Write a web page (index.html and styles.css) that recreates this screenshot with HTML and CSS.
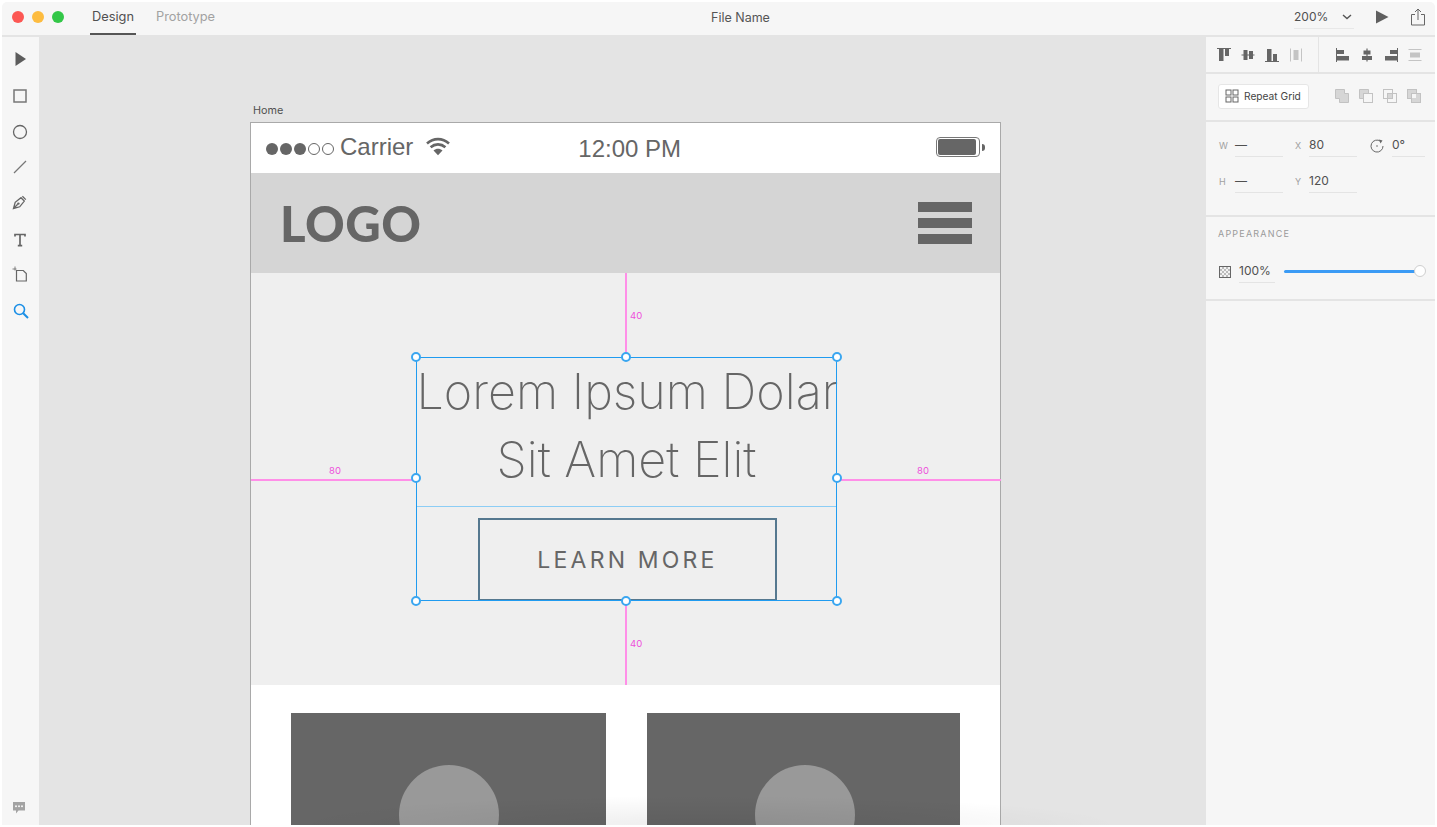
FILE: index.html
```html
<!DOCTYPE html>
<html lang="en">
<head>
    <meta charset="UTF-8">
    <title>File Name</title>
    <link rel="stylesheet" href="styles.css">
</head>
<body>
    <div class="window">
        <header class="titlebar">
            <div class="lights">
                <span class="light red"></span>
                <span class="light yellow"></span>
                <span class="light green"></span>
            </div>
            <nav class="tabs">
                <a class="tab active">Design</a>
                <a class="tab">Prototype</a>
            </nav>
            <div class="file-name">File Name</div>
            <div class="zoom-select">
                <span>200%</span>
                <svg width="10" height="6" viewBox="0 0 10 6"><path d="M1 1l4 3.6L9 1" fill="none" stroke="#555" stroke-width="1.4"/></svg>
            </div>
            <svg class="play" width="14" height="14" viewBox="0 0 14 14"><path d="M1 0.5L13.5 7 1 13.5z" fill="#5f5f5f"/></svg>
            <svg class="share" width="16" height="18" viewBox="0 0 16 18"><path d="M5 6.5H1.5v10.5h13V6.5H11M8 12V1.2M5 4l3-3 3 3" fill="none" stroke="#666" stroke-width="1"/></svg>
        </header>

        <div class="main">
            <aside class="toolbar">
                <div class="tool tool-arrow"><svg width="14" height="16" viewBox="0 0 14 16"><path d="M1.500 1l10.500 7-10.500 7z" fill="#5c5c5c"/></svg></div>
                <div class="tool"><svg width="14" height="14" viewBox="0 0 14 14"><rect x="1" y="1" width="12" height="12" fill="none" stroke="#777" stroke-width="1.500"/></svg></div>
                <div class="tool"><svg width="16" height="16" viewBox="0 0 16 16"><circle cx="8" cy="8" r="6.500" fill="none" stroke="#666" stroke-width="1.300"/></svg></div>
                <div class="tool up1"><svg width="14" height="14" viewBox="0 0 14 14"><path d="M1 13L13 1" stroke="#777" stroke-width="1.200"/></svg></div>
                <div class="tool up2"><svg width="16" height="16" viewBox="0 0 16 16"><path d="M1.500 14.500L3.200 8.300 9 3.700l3.300 3.400-4.600 5.700zM10.400 2.200l3.400 3.400M1.500 14.500l4.200-4.200" fill="none" stroke="#666" stroke-width="1.300"/><circle cx="6.400" cy="9.600" r="1.200" fill="#666"/></svg></div>
                <div class="tool"><svg width="14" height="14" viewBox="0 0 14 14"><path d="M2 3.500V1.500h10v2M7 1.500v11M4.800 12.700h4.400" fill="none" stroke="#666" stroke-width="1.700"/></svg></div>
                <div class="tool up2"><svg width="16" height="16" viewBox="0 0 16 16"><path d="M4.500 4.500h6.800l3 3v7.500H4.500z" fill="none" stroke="#666" stroke-width="1.200"/><path d="M0.500 3h4M3 0.500v4" stroke="#666" stroke-width="0.800"/></svg></div>
                <div class="tool up1 tool-search"><svg width="16" height="16" viewBox="0 0 16 16"><circle cx="6.500" cy="6.500" r="5" fill="none" stroke="#1b8fe6" stroke-width="1.600"/><path d="M10.200 10.200l4.800 4.800" stroke="#1b8fe6" stroke-width="2"/></svg></div>
                <div class="tool chat"><svg width="14" height="14" viewBox="0 0 14 14"><path d="M1 1h12v8.500H6.500L4 12.500V9.500H1z" fill="#a3a3a3"/><circle cx="4" cy="5.200" r="1" fill="#f6f6f6"/><circle cx="7" cy="5.200" r="1" fill="#f6f6f6"/><circle cx="10" cy="5.200" r="1" fill="#f6f6f6"/></svg></div>
            </aside>

            <main class="canvas">
                <div class="artboard-name">Home</div>
                <div class="artboard">
                    <div class="status-bar">
                        <div class="signal">
                            <span class="dot"></span><span class="dot"></span><span class="dot"></span>
                            <span class="dot empty"></span><span class="dot empty"></span>
                        </div>
                        <span class="carrier">Carrier</span>
                        <svg class="wifi" width="24" height="19" viewBox="0 0 24 19"><path d="M1 6.500C7.500 0.700 16.500 0.700 23 6.500M4.600 10.300C9 6.400 15 6.400 19.400 10.300" fill="none" stroke="#666" stroke-width="2.600"/><path d="M7.500 13.500C10.300 11.300 13.700 11.300 16.500 13.500L12 18.300z" fill="#666"/></svg>
                        <span class="clock">12:00 PM</span>
                        <div class="battery"><span class="battery-fill"></span></div>
                        <span class="battery-tip"></span>
                    </div>
                    <div class="site-header">
                        <div class="logo">LOGO</div>
                        <div class="burger"><span></span><span></span><span></span></div>
                    </div>
                    <section class="hero">
                        <h1 class="hero-title">Lorem Ipsum Dolar<br>Sit Amet Elit</h1>
                        <a class="learn-more">LEARN MORE</a>

                        <div class="guide guide-top"><span class="guide-num">40</span></div>
                        <div class="guide guide-bottom"><span class="guide-num">40</span></div>
                        <div class="guide guide-left"><span class="guide-num">80</span></div>
                        <div class="guide guide-right"><span class="guide-num">80</span></div>
                        <div class="selection">
                            <div class="selection-line"></div>
                            <span class="handle h-tl"></span><span class="handle h-tc"></span><span class="handle h-tr"></span>
                            <span class="handle h-ml"></span><span class="handle h-mr"></span>
                            <span class="handle h-bl"></span><span class="handle h-bc"></span><span class="handle h-br"></span>
                        </div>
                    </section>
                    <section class="cards">
                        <div class="card card-a"><span class="card-circle"></span></div>
                        <div class="card card-b"><span class="card-circle"></span></div>
                    </section>
                </div>
                <div class="bottom-shadow"></div>
            </main>

            <aside class="panel">
                <div class="panel-section align-row">
                    <div class="align-group first">
                        <svg width="16" height="16" viewBox="0 0 16 16"><path d="M1 1.500h14" stroke="#666" stroke-width="1"/><rect x="3" y="2" width="4.500" height="12" fill="#666"/><rect x="9" y="2" width="4" height="7" fill="#666"/></svg>
                        <svg width="16" height="16" viewBox="0 0 16 16"><path d="M1.500 8h13" stroke="#666" stroke-width="1.200"/><rect x="3.500" y="3" width="4" height="10" fill="#666"/><rect x="9" y="4" width="4" height="8" fill="#666"/></svg>
                        <svg width="16" height="16" viewBox="0 0 16 16"><path d="M1 14.500h14" stroke="#666" stroke-width="1"/><rect x="3" y="2" width="4.500" height="12" fill="#666"/><rect x="9" y="7" width="4" height="7" fill="#666"/></svg>
                        <svg width="16" height="16" viewBox="0 0 16 16"><path d="M2.500 1.500v13M13.500 1.500v13" stroke="#c4c4c4" stroke-width="1"/><rect x="5.500" y="3" width="5" height="10" fill="#c4c4c4"/></svg>
                    </div>
                    <div class="align-group">
                        <svg width="16" height="16" viewBox="0 0 16 16"><path d="M1.500 1v14" stroke="#666" stroke-width="1"/><rect x="2" y="3" width="7" height="4" fill="#666"/><rect x="2" y="9" width="12" height="4.500" fill="#666"/></svg>
                        <svg width="16" height="16" viewBox="0 0 16 16"><path d="M8 1.500v13" stroke="#666" stroke-width="1.200"/><rect x="4.500" y="3.500" width="7" height="4" fill="#666"/><rect x="3" y="9" width="10" height="4" fill="#666"/></svg>
                        <svg width="16" height="16" viewBox="0 0 16 16"><path d="M14.500 1v14" stroke="#666" stroke-width="1"/><rect x="7" y="3" width="7" height="4" fill="#666"/><rect x="2" y="9" width="12" height="4.500" fill="#666"/></svg>
                        <svg width="16" height="16" viewBox="0 0 16 16"><path d="M1.500 2.500h13M1.500 13.500h13" stroke="#c4c4c4" stroke-width="1"/><rect x="3" y="5.500" width="10" height="5" fill="#c4c4c4"/></svg>
                    </div>
                </div>

                <div class="panel-section repeat-row">
                    <div class="repeat-btn">
                        <svg width="14" height="14" viewBox="0 0 14 14"><g fill="none" stroke="#666"><rect x="1" y="1" width="5" height="5"/><rect x="8" y="1" width="5" height="5"/><rect x="1" y="8" width="5" height="5"/><rect x="8" y="8" width="5" height="5"/></g></svg>
                        <span>Repeat Grid</span>
                    </div>
                    <div class="path-group">
                        <svg width="16" height="16" viewBox="0 0 16 16"><path d="M1.500 1.500h9v4h4v9h-9v-4h-4z" fill="#d6d6d6" stroke="#c2c2c2"/></svg>
                        <svg width="16" height="16" viewBox="0 0 16 16"><path d="M1.500 1.500h9v4h-5v5h-4z" fill="#d6d6d6" stroke="#c2c2c2"/><rect x="5.500" y="5.500" width="9" height="9" fill="none" stroke="#c2c2c2"/></svg>
                        <svg width="16" height="16" viewBox="0 0 16 16"><g fill="none" stroke="#c2c2c2"><rect x="1.500" y="1.500" width="9" height="9"/><rect x="5.500" y="5.500" width="9" height="9"/></g><rect x="6" y="6" width="4" height="4" fill="#d6d6d6"/></svg>
                        <svg width="16" height="16" viewBox="0 0 16 16"><rect x="1.500" y="1.500" width="9" height="9" fill="#d6d6d6" stroke="#c2c2c2"/><rect x="5.500" y="5.500" width="9" height="9" fill="#d6d6d6" stroke="#c2c2c2"/><rect x="6" y="6" width="4" height="4" fill="#f6f6f6"/></svg>
                    </div>
                </div>

                <div class="panel-section transform">
                    <div class="field-row">
                        <span class="field-label">W</span>
                        <span class="field">—</span>
                        <span class="field-label second">X</span>
                        <span class="field">80</span>
                        <svg class="rotate" width="14" height="14" viewBox="0 0 14 14"><path d="M10.500 2.200A6 6 0 1 0 13 7" fill="none" stroke="#666" stroke-width="1"/><path d="M9 0.500l3.500 1-2 3z" fill="#666"/><circle cx="7" cy="7" r="0.800" fill="#666"/></svg>
                        <span class="field short">0°</span>
                    </div>
                    <div class="field-row">
                        <span class="field-label">H</span>
                        <span class="field">—</span>
                        <span class="field-label second">Y</span>
                        <span class="field">120</span>
                    </div>
                </div>

                <div class="panel-section appearance">
                    <div class="section-title">APPEARANCE</div>
                    <div class="opacity-row">
                        <span class="opacity-icon"></span>
                        <span class="field opacity-value">100%</span>
                        <div class="slider"><span class="slider-knob"></span></div>
                    </div>
                </div>
            </aside>
        </div>
    </div>
</body>
</html>
```

FILE: styles.css
```css
* {
    box-sizing: border-box;
}
html, body {
    margin: 0;
    height: 100%;
    background: #fff;
    overflow: hidden;
}
body {
    font-family: 'Inter', 'Liberation Sans', sans-serif;
    color: #505050;
}
.window {
    margin: 2px;
    width: 1433px;
    height: 823px;
    background: #f6f6f6;
    border-radius: 5px 5px 0 0;
    overflow: hidden;
    display: flex;
    flex-direction: column;
}

/* title bar */
.titlebar {
    height: 35px;
    flex: none;
    display: flex;
    align-items: center;
    border-bottom: 2px solid #e4e4e4;
    position: relative;
}
.lights {
    display: flex;
    gap: 8px;
    margin-left: 10px;
    margin-top: -3px;
}
.light {
    width: 12px;
    height: 12px;
    border-radius: 50%;
}
.red { background: #fc5753; }
.yellow { background: #fdbc40; }
.green { background: #33c748; }
.tabs {
    display: flex;
    height: 33px;
    margin-left: 26px;
    gap: 18px;
}
.tab {
    font-size: 12.8px;
    color: #a2a2a2;
    padding: 0 2px;
    line-height: 30px;
    height: 33px;
}
.tab.active {
    color: #505050;
    border-bottom: 2px solid #555;
}
.file-name {
    font-size: 12.5px;
    color: #555;
    position: absolute;
    left: 709px;
    top: 8px;
}
.zoom-select {
    margin-left: auto;
    width: 60px;
    height: 23px;
    margin-top: -3px;
    border-bottom: 1px solid #e8e8e8;
    display: flex;
    align-items: center;
    justify-content: space-between;
    font-size: 12px;
    padding-right: 2px;
    color: #505050;
}
.play {
    margin-left: 21px;
    margin-top: -3px;
}
.share {
    margin: -3px 9px 0 21px;
}

/* main area */
.main {
    flex: 1;
    min-height: 0;
    display: flex;
}
.toolbar {
    width: 37px;
    flex: none;
    display: flex;
    flex-direction: column;
    padding: 5px 1px 0 0;
}
.tool {
    height: 36px;
    display: flex;
    align-items: center;
    justify-content: center;
}
.tool.up1 svg { margin-top: -2px; }
.tool.up2 svg { margin-top: -4px; }
.tool-arrow svg { margin: -2px 0 0 2px; }
.tool-search svg { margin-left: 2px; }
.chat {
    margin-top: auto;
}
.chat svg {
    margin: 2px 2px 0 0;
}
.canvas {
    flex: 1;
    background: #e4e4e4;
    position: relative;
    overflow: hidden;
    padding: 66px 0 0 211px;
}
.artboard-name {
    font-size: 10.8px;
    line-height: 16px;
    height: 19px;
    color: #505050;
    margin-left: 3px;
}
.artboard {
    width: 751px;
    border: 1px solid #a9a9a9;
    border-bottom: none;
    background: #fff;
}

/* artboard content */
.status-bar {
    height: 50px;
    background: #fff;
    display: flex;
    align-items: center;
    font-family: 'Liberation Sans', sans-serif;
    color: #666;
    position: relative;
}
.signal {
    display: flex;
    gap: 2px;
    margin-left: 15px;
    margin-top: 2px;
}
.dot {
    width: 12px;
    height: 12px;
    border-radius: 50%;
    background: #666;
}
.dot.empty {
    background: transparent;
    border: 1px solid #666;
}
.carrier {
    font-size: 24px;
    margin-left: 6px;
    margin-top: -3px;
}
.wifi {
    margin-left: 13px;
    margin-top: -4px;
}
.clock {
    font-size: 24px;
    margin-left: 128px;
    margin-top: 1px;
}
.battery {
    width: 44px;
    height: 20px;
    margin-left: auto;
    margin-right: 20px;
    border: 1px solid #777;
    border-radius: 4px;
    padding: 1px;
    margin-top: -3px;
}
.battery-fill {
    display: block;
    width: 38px;
    height: 16px;
    background: #666;
    border-radius: 2px;
}
.battery-tip {
    position: absolute;
    left: 731px;
    top: 21px;
    width: 3px;
    height: 7px;
    background: #666;
    border-radius: 0 3px 3px 0;
}
.site-header {
    height: 100px;
    background: #d5d5d5;
    display: flex;
    align-items: center;
    justify-content: space-between;
    padding: 0 28px 0 29px;
}
.logo {
    font-family: 'Lato', sans-serif;
    font-weight: 900;
    font-size: 49px;
    letter-spacing: 0.5px;
    color: #666;
}
.burger {
    width: 54px;
    display: flex;
    flex-direction: column;
    gap: 6px;
}
.burger span {
    height: 10px;
    background: #666;
}
.hero {
    height: 412px;
    background: #efefef;
    position: relative;
    padding-top: 84px;
    display: flex;
    flex-direction: column;
    align-items: center;
}
.hero-title {
    width: 420px;
    margin: 0 0 0 2px;
    height: 161px;
    padding-top: 1px;
    font-family: 'Inter', sans-serif;
    font-weight: 200;
    font-size: 48.5px;
    line-height: 68px;
    text-align: center;
    color: #666;
    white-space: nowrap;
}
.learn-more {
    width: 299px;
    height: 83px;
    margin-left: 4px;
    border: 2px solid #55788f;
    font-family: 'Inter', sans-serif;
    font-size: 23px;
    letter-spacing: 3.2px;
    line-height: 81px;
    text-align: center;
    color: #666;
}

/* measure guides and selection */
.guide {
    position: absolute;
    background: #ff8fe8;
}
.guide-top, .guide-bottom {
    left: 374px;
    width: 2px;
}
.guide-top { top: 0; height: 84px; }
.guide-bottom { top: 327px; height: 85px; }
.guide-left, .guide-right {
    top: 206px;
    height: 2px;
}
.guide-left { left: 0; width: 165px; }
.guide-right { left: 586px; width: 164px; }
.guide-num {
    position: absolute;
    font-size: 9.5px;
    line-height: 12px;
    color: #ee4fdc;
}
.guide-top .guide-num, .guide-bottom .guide-num {
    left: 5px;
    top: 37px;
}
.guide-bottom .guide-num { top: 38px; }
.guide-left .guide-num, .guide-right .guide-num {
    left: 78px;
    top: -14px;
}
.guide-right .guide-num { left: 80px; }
.selection {
    position: absolute;
    left: 165px;
    top: 84px;
    width: 421px;
    height: 244px;
    border: 1px solid #1f9bf0;
}
.selection-line {
    position: absolute;
    left: 0;
    right: 0;
    top: 148px;
    height: 1px;
    background: #8ccdf5;
}
.handle {
    position: absolute;
    width: 10px;
    height: 10px;
    border-radius: 50%;
    background: #fff;
    border: 2px solid #3aa6f0;
}
.h-tl { left: -6px; top: -6px; }
.h-tc { left: 204px; top: -6px; }
.h-tr { right: -6px; top: -6px; }
.h-ml { left: -6px; top: 115px; }
.h-mr { right: -6px; top: 115px; }
.h-bl { left: -6px; bottom: -6px; }
.h-bc { left: 204px; bottom: -6px; }
.h-br { right: -6px; bottom: -6px; }

.cards {
    background: #fff;
    height: 140px;
    display: flex;
    padding: 28px 0 0 40px;
}
.card {
    height: 200px;
    background: #666;
    display: flex;
    justify-content: center;
    padding-top: 52px;
}
.card-a { width: 315px; }
.card-b { width: 313px; margin-left: 41px; padding-left: 2px; }
.card-circle {
    width: 100px;
    height: 100px;
    border-radius: 50%;
    background: #999;
}
.bottom-shadow {
    position: absolute;
    left: 240px;
    right: 80px;
    bottom: 0;
    height: 30px;
    background: radial-gradient(ellipse at 50% 100%, rgba(0, 0, 0, 0.07), rgba(0, 0, 0, 0) 70%);
}

/* right panel */
.panel {
    width: 229px;
    flex: none;
    display: flex;
    flex-direction: column;
    font-size: 12px;
}
.panel-section {
    border-bottom: 2px solid #e4e4e4;
}
.align-row {
    height: 37px;
    display: flex;
}
.align-group {
    display: flex;
    gap: 8px;
    align-items: center;
    padding-left: 10px;
}
.align-group.first {
    width: 113px;
    border-right: 1px solid #e4e4e4;
}
.align-group:not(.first) {
    padding-left: 16px;
}
.repeat-row {
    height: 48px;
    display: flex;
    align-items: center;
    padding-left: 12px;
    padding-bottom: 2px;
}
.repeat-btn {
    width: 91px;
    height: 25px;
    background: #fff;
    border: 1px solid #e6e6e6;
    border-radius: 3px;
    display: flex;
    align-items: center;
    gap: 5px;
    padding-left: 6px;
    font-size: 10.2px;
    color: #444;
    white-space: nowrap;
}
.path-group {
    display: flex;
    gap: 8px;
    margin-left: 25px;
}
.transform {
    height: 95px;
    padding: 12px 0 0 13px;
}
.field-row {
    display: flex;
    align-items: center;
    margin-bottom: 13px;
}
.field-label {
    width: 16px;
    font-size: 9px;
    color: #a0a0a0;
}
.field-label.second {
    width: 14px;
    margin-left: 12px;
}
.field {
    width: 48px;
    height: 23px;
    line-height: 22px;
    border-bottom: 1px solid #e4e4e4;
    color: #505050;
    font-size: 12px;
}
.field.short {
    width: 33px;
}
.rotate {
    margin: 0 8px 0 13px;
}
.appearance {
    height: 84px;
    padding: 12px 0 0 12px;
}
.section-title {
    font-size: 9px;
    line-height: 10px;
    letter-spacing: 1.2px;
    color: #9a9a9a;
    margin-bottom: 21px;
}
.opacity-row {
    display: flex;
    align-items: center;
}
.opacity-icon {
    width: 12px;
    height: 12px;
    margin-left: 1px;
    border: 1px solid #666;
    background: repeating-conic-gradient(#bbb 0 25%, #f2f2f2 0 50%) 0 0 / 4px 4px;
}
.opacity-value {
    width: 36px;
    margin-left: 8px;
}
.slider {
    width: 136px;
    height: 3px;
    margin-left: 9px;
    background: #3b9bf5;
    border-radius: 2px;
    position: relative;
}
.slider-knob {
    position: absolute;
    right: -6px;
    top: -5px;
    width: 12px;
    height: 12px;
    border-radius: 50%;
    background: #fff;
    border: 1px solid #cfcfcf;
}
```
